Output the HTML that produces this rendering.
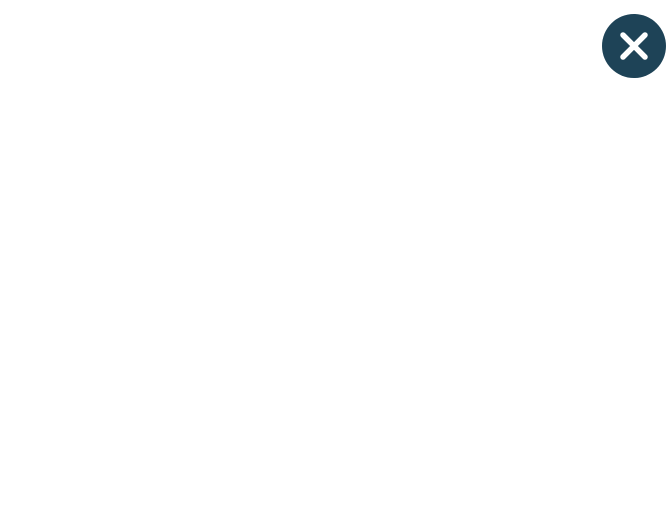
<!DOCTYPE html>
<html><head><style>html,body{margin:0;padding:0;background:#fff;width:666px;height:522px;overflow:hidden}</style></head>
<body>
<svg width="666" height="522" style="position:absolute;left:0;top:0">
<circle cx="634" cy="46" r="32" fill="#1e4357"/>
<path d="M623 35 L645 57 M645 35 L623 57" stroke="#fff" stroke-width="5.5" stroke-linecap="round"/>
</svg>
</body></html>
